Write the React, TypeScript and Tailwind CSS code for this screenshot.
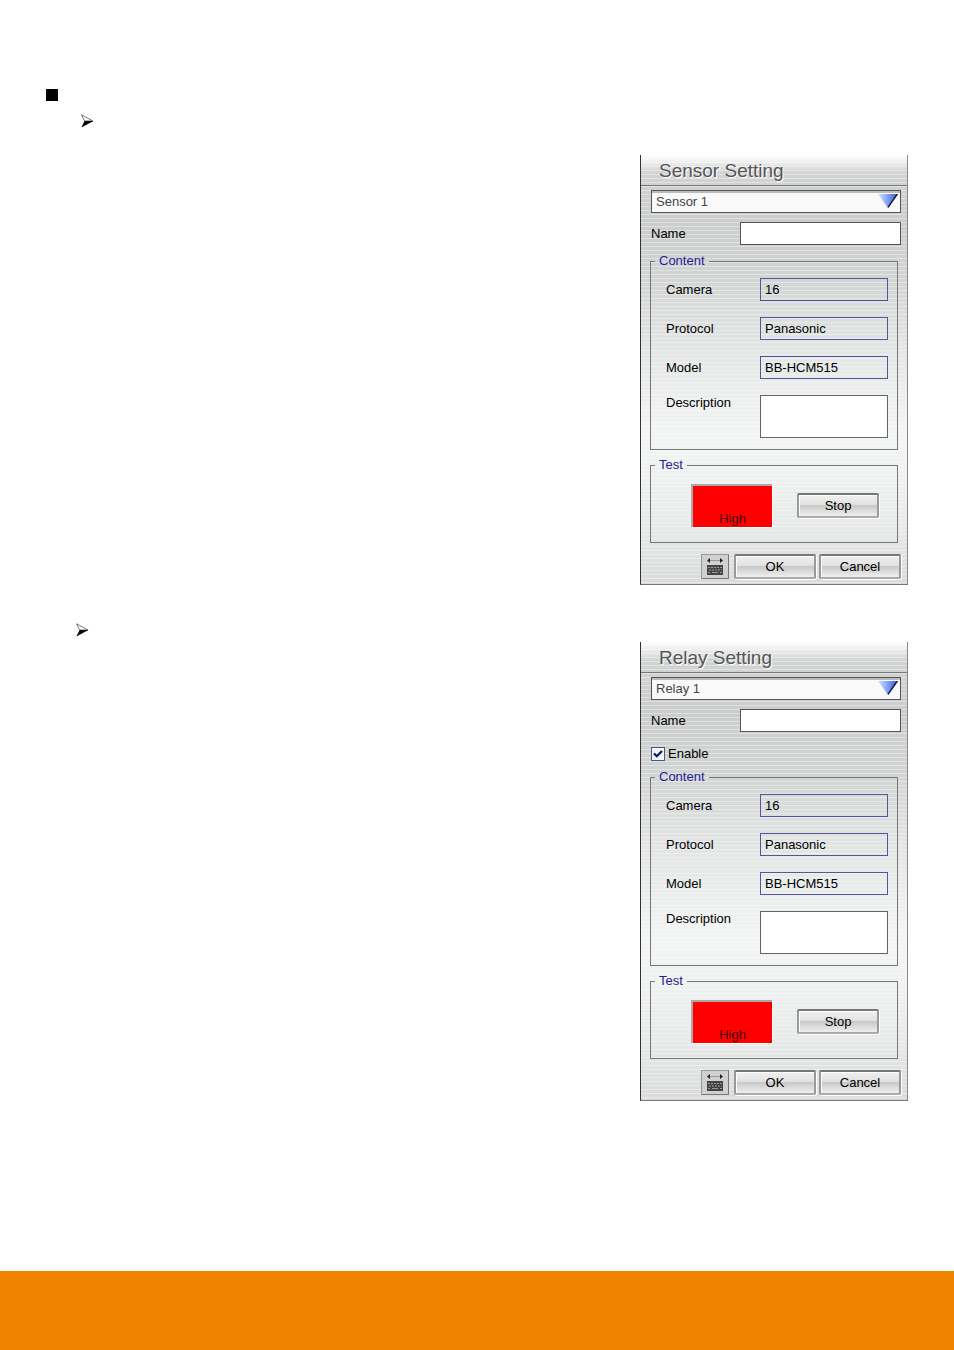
import { useId, useState } from "react";
import type { ReactNode } from "react";

interface SettingPanelProps {
  title: string;
  options: string[];
  hasEnable?: boolean;
}

const details = [
  { label: "Camera", value: "16" },
  { label: "Protocol", value: "Panasonic" },
  { label: "Model", value: "BB-HCM515" },
];

function ArrowBullet() {
  return (
    <svg width="13" height="14" viewBox="0 0 13 14" aria-hidden="true">
      <path d="M0.5 0.8 L12 7 L3.6 7 Z" fill="#fff" stroke="#555" strokeWidth="0.8" />
      <path d="M3.6 7 L12.5 7 L0.3 13.6 Z" fill="#000" />
    </svg>
  );
}

function KeyboardIcon() {
  return (
    <svg width="22" height="19" viewBox="0 0 22 19" aria-hidden="true">
      <path d="M5 3.5 H17" stroke="#999" strokeWidth="1" />
      <path d="M3 3.5 L6 1 V6 Z M19 3.5 L16 1 V6 Z" fill="#222" />
      <rect x="3" y="8" width="16" height="10" fill="#444" />
      <path d="M4 10.5 H18 M5 13 H18" stroke="#999" strokeWidth="1" strokeDasharray="2 1" />
      <path d="M4 15.5 H6 M8 15.5 H14 M16 15.5 H18" stroke="#999" strokeWidth="1" />
    </svg>
  );
}

function Triangle() {
  return (
    <svg
      className="pointer-events-none absolute top-1 right-[3px]"
      width="20"
      height="14"
      viewBox="0 0 20 14"
      aria-hidden="true"
    >
      <defs>
        <linearGradient id="triangle" x1="0" y1="0" x2="1" y2="0">
          <stop offset="0.1" stopColor="#c4d4fc" />
          <stop offset="0.5" stopColor="#7ea0fb" />
          <stop offset="0.85" stopColor="#4a68d8" />
        </linearGradient>
      </defs>
      <path d="M0 0 H20 L10 14 Z" fill="url(#triangle)" />
      <path d="M19.3 0 L10 13.3" stroke="#10183c" strokeWidth="1.4" />
    </svg>
  );
}

function Group({ title, children }: { title: string; children: ReactNode }) {
  return (
    <fieldset className="mr-[3px] -ml-px min-w-0 border border-[#777]">
      <legend className="ml-1 px-1 leading-4 text-[#2a1a9a]">{title}</legend>
      {children}
    </fieldset>
  );
}

function PanelButton({ children }: { children: ReactNode }) {
  return (
    <button
      type="button"
      className="h-[25px] w-[82px] cursor-pointer rounded-[2px] border-2 border-t-[#777] border-r-[#999] border-b-[#aaa] border-l-[#999] bg-[linear-gradient(#f0f0f0_0%,#e2e2e2_45%,#c8c8c8_50%,#dcdcdc_75%,#efefef_100%)] leading-4 shadow-[inset_1px_1px_0_#fff,1px_1px_0_#fff]"
    >
      {children}
    </button>
  );
}

function SettingPanel({ title, options, hasEnable = false }: SettingPanelProps) {
  const id = useId();
  const [name, setName] = useState("");
  const [enabled, setEnabled] = useState(true);
  const [description, setDescription] = useState("");

  return (
    <form
      onSubmit={(e) => e.preventDefault()}
      className="w-[268px] border-r border-b border-l border-r-[#888] border-b-[#777] border-l-[#333] bg-[repeating-linear-gradient(#ffffff00_0_3px,#ffffff60_3px_4px),linear-gradient(#ffffff_0%,#d2d4d3_4%,#cbcdcc_15%,#d2d4d3_28%,#e3e4e4_45%,#f3f4f4_65%,#eff0f0_75%,#e7e9e9_87%,#d9dbdb_100%)] text-[13px] text-black"
    >
      <h2 className="h-[31px] border-b border-[#777] pl-[18px] text-[19px] leading-8 text-[#555] [text-shadow:1px_1px_0_#fff]">
        {title}
      </h2>
      <div className="flex flex-col pt-1 pr-[6px] pb-[5px] pl-[10px]">
        <div className="relative">
          <select
            aria-label={title}
            className="block h-[23px] w-full appearance-none border border-[#555] bg-[#f9f9f9] pl-1 text-[#444] shadow-[inset_0_2px_0_#bbb]"
          >
            {options.map((option) => (
              <option key={option}>{option}</option>
            ))}
          </select>
          <Triangle />
        </div>

        <div className="mt-[9px] flex items-center">
          <label htmlFor={`${id}-name`} className="w-[89px] leading-4">
            Name
          </label>
          <input
            id={`${id}-name`}
            value={name}
            onChange={(e) => setName(e.target.value)}
            className="h-[23px] min-w-0 flex-1 border border-[#555] bg-white px-1"
          />
        </div>

        {hasEnable && (
          <label className="mt-[14px] flex h-[15px] items-center gap-[3px] leading-4">
            <span className="relative">
              <input
                type="checkbox"
                checked={enabled}
                onChange={(e) => setEnabled(e.target.checked)}
                className="block size-[14px] appearance-none border border-[#3d5a8a] bg-[#f4f6fa]"
              />
              {enabled && (
                <svg
                  className="pointer-events-none absolute top-0 left-0"
                  width="14"
                  height="14"
                  viewBox="0 0 14 14"
                  aria-hidden="true"
                >
                  <path d="M3 6.5 L5.8 9.3 L11 4" fill="none" stroke="#0a1670" strokeWidth="2.2" />
                </svg>
              )}
            </span>
            Enable
          </label>
        )}

        <div className="mt-2 flex flex-col gap-[7px]">
          <Group title="Content">
            <div className="flex flex-col gap-4 pt-[9px] pr-[9px] pb-[11px] pl-[15px]">
              {details.map((detail) => (
                <div key={detail.label} className="flex items-center">
                  <label htmlFor={`${id}-${detail.label}`} className="w-[94px] leading-4">
                    {detail.label}
                  </label>
                  <input
                    id={`${id}-${detail.label}`}
                    value={detail.value}
                    readOnly
                    className="h-[23px] min-w-0 flex-1 border border-[#55559a] px-1"
                  />
                </div>
              ))}
              <div className="flex items-start">
                <label htmlFor={`${id}-description`} className="w-[94px] leading-4">
                  Description
                </label>
                <textarea
                  id={`${id}-description`}
                  value={description}
                  onChange={(e) => setDescription(e.target.value)}
                  className="block h-[43px] min-w-0 flex-1 resize-none border border-[#666] bg-white px-1"
                />
              </div>
            </div>
          </Group>

          <Group title="Test">
            <div className="flex items-center justify-between pt-[11px] pr-[18px] pb-[15px] pl-10">
              <output className="flex h-[43px] w-[81px] items-end justify-center border-t-2 border-l-2 border-[#aaa] bg-[#ff0000] leading-4 text-[#400] shadow-[1px_1px_0_#fff]">
                High
              </output>
              <PanelButton>Stop</PanelButton>
            </div>
          </Group>
        </div>

        <div className="mt-[11px] flex justify-end gap-[3px]">
          <button
            type="button"
            aria-label="Keyboard"
            className="mr-[2px] flex h-[25px] w-7 cursor-pointer items-center justify-center border border-t-[#999] border-r-[#777] border-b-[#777] border-l-[#999] bg-[#d0d0d0]"
          >
            <KeyboardIcon />
          </button>
          <PanelButton>OK</PanelButton>
          <PanelButton>Cancel</PanelButton>
        </div>
      </div>
    </form>
  );
}

export default function App() {
  return (
    <div className="flex min-h-screen flex-col bg-white font-['Liberation_Sans',Arial,sans-serif]">
      <main className="flex-1 px-[46px] pt-[89px] pb-10">
        <div className="size-3 bg-black" />
        <ul>
          <li className="pt-[13px]">
            <div className="pl-[35px]">
              <ArrowBullet />
            </div>
            <div className="mt-[27px] flex justify-end">
              <SettingPanel title="Sensor Setting" options={["Sensor 1", "Sensor 2"]} />
            </div>
          </li>
          <li className="pt-[38px]">
            <div className="pl-[30px]">
              <ArrowBullet />
            </div>
            <div className="mt-[5px] flex justify-end">
              <SettingPanel title="Relay Setting" options={["Relay 1", "Relay 2"]} hasEnable />
            </div>
          </li>
        </ul>
      </main>
      <footer className="h-[79px] bg-[#f08300]" />
    </div>
  );
}
